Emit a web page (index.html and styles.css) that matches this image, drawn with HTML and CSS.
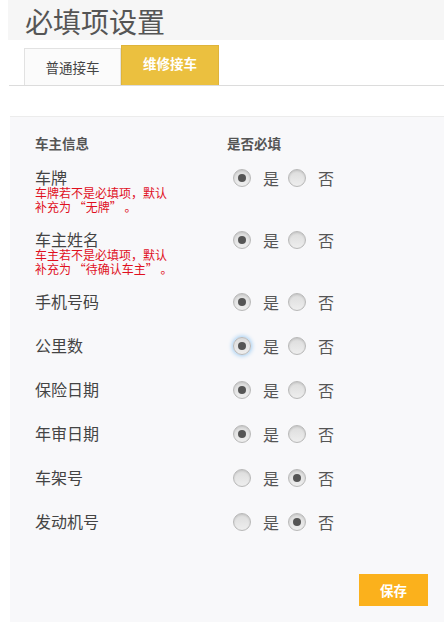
FILE: index.html
```html
<!DOCTYPE html>
<html lang="zh-CN">
<head>
    <meta charset="utf-8">
    <meta name="viewport" content="width=device-width, initial-scale=1.0">
    <title>必填项设置</title>
    <link rel="stylesheet" href="styles.css">
</head>
<body>
    <header class="page-header">
        <h1 class="page-title">必填项设置</h1>
    </header>

    <nav class="tabs">
        <div class="tab">普通接车</div>
        <div class="tab tab-active">维修接车</div>
    </nav>

    <main class="panel">
        <div class="panel-head">
            <span class="col-label">车主信息</span>
            <span class="col-option">是否必填</span>
        </div>

        <div class="field field-note">
            <div class="col-label">
                <div class="field-name">车牌</div>
                <p class="field-hint">车牌若不是必填项，默认<br>补充为 “无牌” 。</p>
            </div>
            <div class="col-option choices">
                <span class="radio checked"></span><span class="choice-text">是</span>
                <span class="radio"></span><span class="choice-text">否</span>
            </div>
        </div>

        <div class="field field-note">
            <div class="col-label">
                <div class="field-name">车主姓名</div>
                <p class="field-hint">车主若不是必填项，默认<br>补充为 “待确认车主” 。</p>
            </div>
            <div class="col-option choices">
                <span class="radio checked"></span><span class="choice-text">是</span>
                <span class="radio"></span><span class="choice-text">否</span>
            </div>
        </div>

        <div class="field">
            <div class="col-label"><div class="field-name">手机号码</div></div>
            <div class="col-option choices">
                <span class="radio checked"></span><span class="choice-text">是</span>
                <span class="radio"></span><span class="choice-text">否</span>
            </div>
        </div>

        <div class="field">
            <div class="col-label"><div class="field-name">公里数</div></div>
            <div class="col-option choices">
                <span class="radio checked focused"></span><span class="choice-text">是</span>
                <span class="radio"></span><span class="choice-text">否</span>
            </div>
        </div>

        <div class="field">
            <div class="col-label"><div class="field-name">保险日期</div></div>
            <div class="col-option choices">
                <span class="radio checked"></span><span class="choice-text">是</span>
                <span class="radio"></span><span class="choice-text">否</span>
            </div>
        </div>

        <div class="field">
            <div class="col-label"><div class="field-name">年审日期</div></div>
            <div class="col-option choices">
                <span class="radio checked"></span><span class="choice-text">是</span>
                <span class="radio"></span><span class="choice-text">否</span>
            </div>
        </div>

        <div class="field">
            <div class="col-label"><div class="field-name">车架号</div></div>
            <div class="col-option choices">
                <span class="radio"></span><span class="choice-text">是</span>
                <span class="radio checked"></span><span class="choice-text">否</span>
            </div>
        </div>

        <div class="field">
            <div class="col-label"><div class="field-name">发动机号</div></div>
            <div class="col-option choices">
                <span class="radio"></span><span class="choice-text">是</span>
                <span class="radio checked"></span><span class="choice-text">否</span>
            </div>
        </div>

        <div class="panel-foot">
            <button class="btn-save" type="button">保存</button>
        </div>
    </main>
</body>
</html>
```

FILE: styles.css
```css
:root {
    --text: #444;
    --muted: #555;
    --hint: #e0101e;
    --tab-active: #ebc03f;
    --save: #fbb11c;
    --line: #dcdcdc;
    --panel: #f8f8fa;
}

* {
    margin: 0;
    padding: 0;
    box-sizing: border-box;
}

body {
    font-family: "Noto Sans CJK SC", "Noto Sans", sans-serif;
    color: var(--text);
    background: #fff;
    overflow: hidden;
}

.page-header {
    margin-left: 8px;
    height: 40px;
    background: #f6f6f6;
    padding-left: 17px;
    display: flex;
    align-items: center;
}

.page-title {
    font-size: 28px;
    font-weight: 400;
    line-height: 1;
    color: var(--muted);
    margin-top: 1px;
}

.tabs {
    margin-left: 9px;
    height: 46px;
    padding-left: 15px;
    display: flex;
    align-items: flex-end;
    border-bottom: 1px solid var(--line);
}

.tab {
    width: 97px;
    height: 37px;
    display: flex;
    align-items: center;
    justify-content: center;
    font-size: 13.5px;
    color: #444;
    background: #fbfbfb;
    border: 1px solid #e2e2e2;
    border-bottom: none;
}

.tab-active {
    width: 98px;
    height: 40px;
    background: var(--tab-active);
    border-color: #dfb43a;
    color: #fff;
    font-weight: 700;
    padding-bottom: 5px;
}

.panel {
    margin: 30px 0 0 10px;
    min-height: 520px;
    background: var(--panel);
    border-top: 1px solid #ececec;
    padding: 16px 0 0 25px;
}

.panel-head,
.field {
    display: flex;
    align-items: flex-start;
}

.col-label {
    width: 192px;
    flex-shrink: 0;
}

.panel-head {
    font-size: 13.5px;
    font-weight: 700;
    line-height: 20px;
    color: var(--muted);
    margin-bottom: 2px;
}

.field {
    padding: 12px 0;
}

.field-note {
    padding-bottom: 3px;
}

.field-name {
    font-size: 16px;
    line-height: 20px;
    color: var(--text);
}

.field-hint {
    font-size: 12px;
    line-height: 14px;
    color: var(--hint);
}

.field-note .field-name {
    margin-bottom: -1px;
}

.choices {
    display: flex;
    align-items: center;
    padding-left: 6px;
    height: 18px;
    margin-top: 2px;
}

.radio {
    width: 18px;
    height: 18px;
    border-radius: 50%;
    border: 1px solid #b8b8b8;
    background: linear-gradient(#dcdcdc, #eeeeee);
    box-shadow: inset 0 1px 2px rgba(0, 0, 0, 0.12);
    display: flex;
    align-items: center;
    justify-content: center;
}

.radio.checked::after {
    content: '';
    width: 8px;
    height: 8px;
    border-radius: 50%;
    background: #555;
}

.radio.focused {
    box-shadow: 0 0 4px 1px #9ccbf2;
}

.choice-text {
    font-size: 16px;
    line-height: 18px;
    color: var(--muted);
    margin: 0 9px 0 12px;
}

.panel-foot {
    display: flex;
    justify-content: flex-end;
    padding-right: 16px;
    margin-top: 31px;
}

.btn-save {
    width: 69px;
    height: 32px;
    border: none;
    background: var(--save);
    color: #fff;
    font-family: inherit;
    font-size: 13.5px;
    font-weight: 700;
}
```
